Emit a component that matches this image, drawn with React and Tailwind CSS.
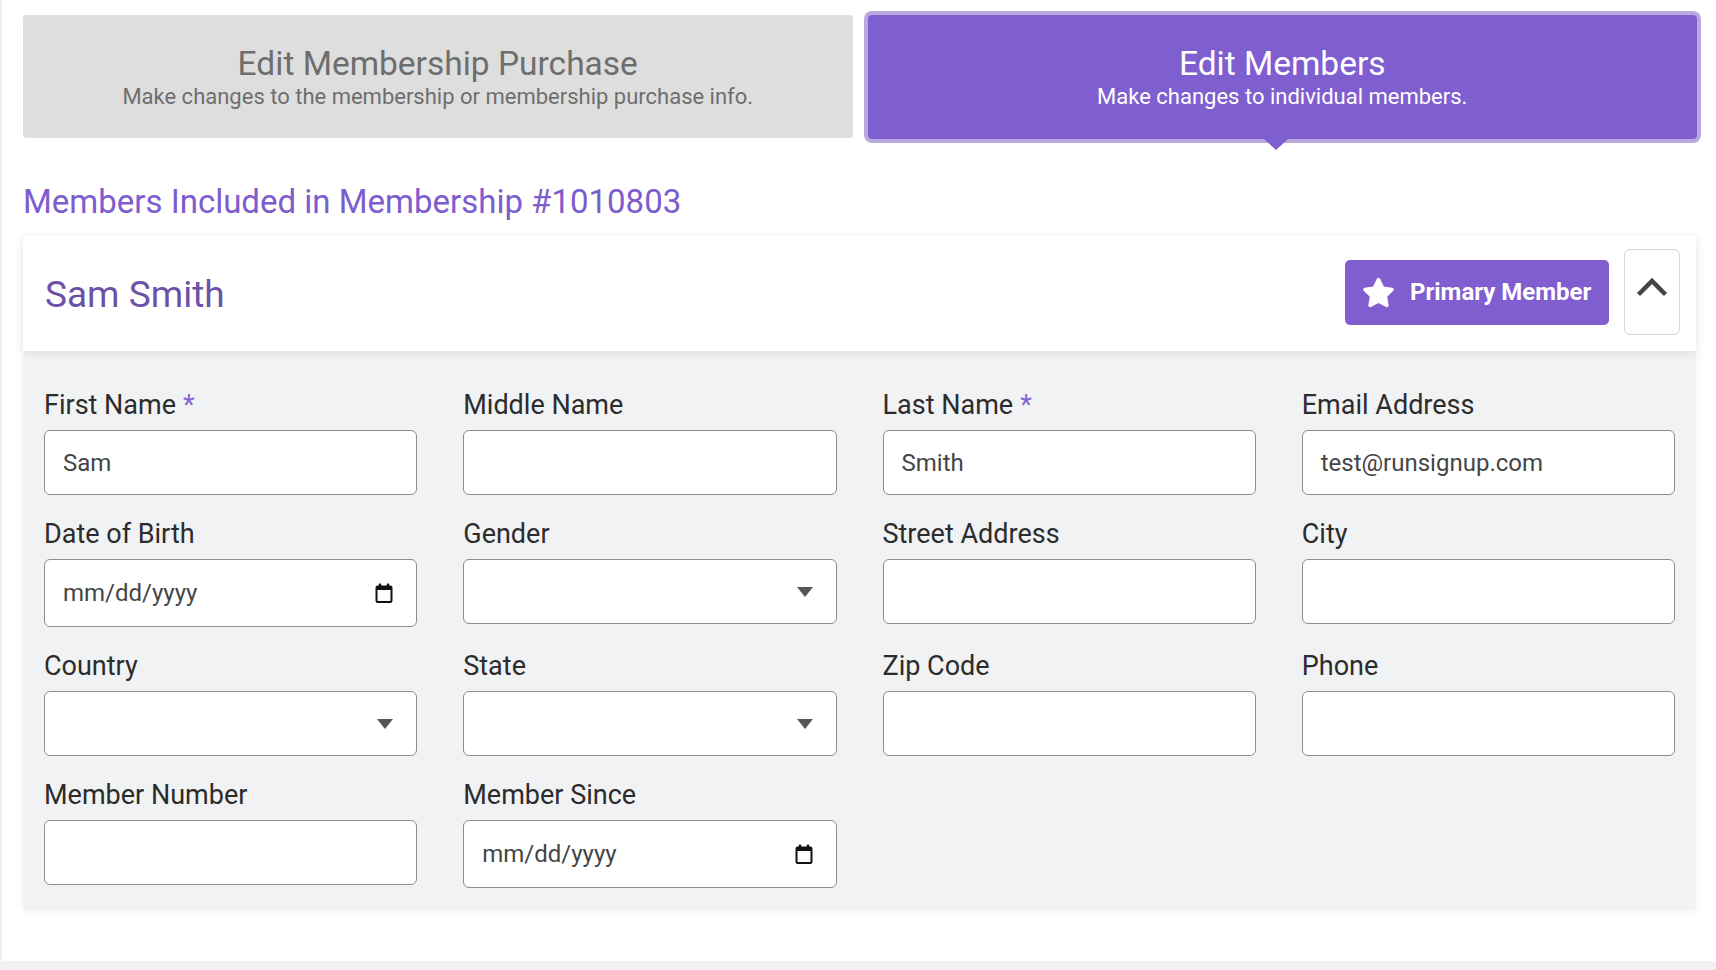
import React from "react";
import { FaStar } from "react-icons/fa";

function CalendarIcon() {
  return (
    <svg width="18" height="20" viewBox="0 0 18 20" className="shrink-0">
      <rect x="1.5" y="3.5" width="15" height="15.5" rx="1.2" fill="none" stroke="#111" strokeWidth="2" />
      <rect x="1" y="3" width="16" height="4" fill="#111" />
      <rect x="3.8" y="0.6" width="2.4" height="3" fill="#111" />
      <rect x="11.8" y="0.6" width="2.4" height="3" fill="#111" />
    </svg>
  );
}

function Label({ text, required }) {
  return (
    <div className="h-[34px] leading-[34px] text-[27px] text-[#2c2c2c] mb-[8px] whitespace-nowrap">
      {text}
      {required && <span className="text-[#8462d6] ml-[7px]">*</span>}
    </div>
  );
}

function TextField({ label, required, value }) {
  return (
    <div>
      <Label text={label} required={required} />
      <div className="h-[65px] bg-white border border-[#8d8d8d] rounded-[6px] flex items-center px-[18px] text-[24px] text-[#454545]">
        {value}
      </div>
    </div>
  );
}

function DateField({ label }) {
  return (
    <div>
      <Label text={label} />
      <div className="h-[68px] bg-white border border-[#8d8d8d] rounded-[6px] flex items-center justify-between pl-[18px] pr-[23px] text-[24px] text-[#454545]">
        <span>mm/dd/yyyy</span>
        <CalendarIcon />
      </div>
    </div>
  );
}

function SelectField({ label }) {
  return (
    <div>
      <Label text={label} />
      <div className="h-[65px] bg-white border border-[#8d8d8d] rounded-[6px] flex items-center justify-end pr-[23px]">
        <svg width="16" height="10" viewBox="0 0 16 10">
          <path d="M0 0 H16 L8 10 Z" fill="#555" />
        </svg>
      </div>
    </div>
  );
}

export default function App() {
  return (
    <div className="w-[1716px] h-[970px] bg-[#f1f1f1] font-[Roboto,sans-serif] overflow-hidden">
      <div className="ml-[2px] h-[961px] bg-white pl-[21px] pr-[20px] pt-[15px]">
        {/* Tabs */}
        <div className="flex gap-[15px]">
          <div className="flex-1 h-[123px] pt-[2px] bg-[#dedede] rounded-[4px] flex flex-col items-center justify-center gap-[1px]">
            <div className="text-[33.5px] leading-[38px] text-[#6e6e6e]">Edit Membership Purchase</div>
            <div className="text-[22px] leading-[26px] text-[#6e6e6e]">
              Make changes to the membership or membership purchase info.
            </div>
          </div>
          <div className="flex-1 h-[124px] pt-[1px] bg-[#7f5ecf] rounded-[4px] ring-4 ring-[#b9a9dd] relative flex flex-col items-center justify-center gap-[1px] mr-[-1px]">
            <div className="text-[33.5px] leading-[38px] text-white">Edit Members</div>
            <div className="text-[22px] leading-[26px] text-white">Make changes to individual members.</div>
            <div className="absolute top-full left-1/2 -ml-[18px] w-0 h-0 border-l-[12px] border-r-[12px] border-t-[11px] border-l-transparent border-r-transparent border-t-[#7f5ecf]" />
          </div>
        </div>

        {/* Heading */}
        <h2 className="mt-[44px] text-[33px] leading-[38px] text-[#7d5dce]">
          Members Included in Membership #1010803
        </h2>

        {/* Card */}
        <div className="mt-[15px] shadow-[0_0_10px_rgba(0,0,0,0.06)]">
          <div className="relative z-10 h-[115px] bg-white flex items-center justify-between pl-[22px] pr-[16px] shadow-[0_3px_8px_rgba(0,0,0,0.07)]">
            <div className="text-[37px] leading-[44px] mt-[2px] text-[#6a53a6]">Sam Smith</div>
            <div className="flex items-center gap-[15px] mb-[3px]">
              <button className="h-[65px] w-[264px] bg-[#805ed0] rounded-[5px] flex items-center pl-[17px] gap-[15px] text-white text-[24px] font-bold">
                <FaStar size={33} />
                <span>Primary Member</span>
              </button>
              <div className="w-[56px] h-[86px] bg-white border border-[#d9d9d9] rounded-[6px] flex justify-center pt-[27px]">
                <svg width="32" height="20" viewBox="0 0 32 20">
                  <path d="M2.5 17.5 L16 4 L29.5 17.5" fill="none" stroke="#454545" strokeWidth="4.5" strokeLinejoin="miter" />
                </svg>
              </div>
            </div>
          </div>
          <div className="bg-[#f1f2f4] px-[21px] pt-[37px] pb-[22px] grid grid-cols-4 gap-x-[46px] gap-y-[22px] items-start">
            <TextField label="First Name" required value="Sam" />
            <TextField label="Middle Name" value="" />
            <TextField label="Last Name" required value="Smith" />
            <TextField label="Email Address" value="test@runsignup.com" />
            <DateField label="Date of Birth" />
            <SelectField label="Gender" />
            <TextField label="Street Address" value="" />
            <TextField label="City" value="" />
            <SelectField label="Country" />
            <SelectField label="State" />
            <TextField label="Zip Code" value="" />
            <TextField label="Phone" value="" />
            <TextField label="Member Number" value="" />
            <DateField label="Member Since" />
          </div>
        </div>
      </div>
    </div>
  );
}
